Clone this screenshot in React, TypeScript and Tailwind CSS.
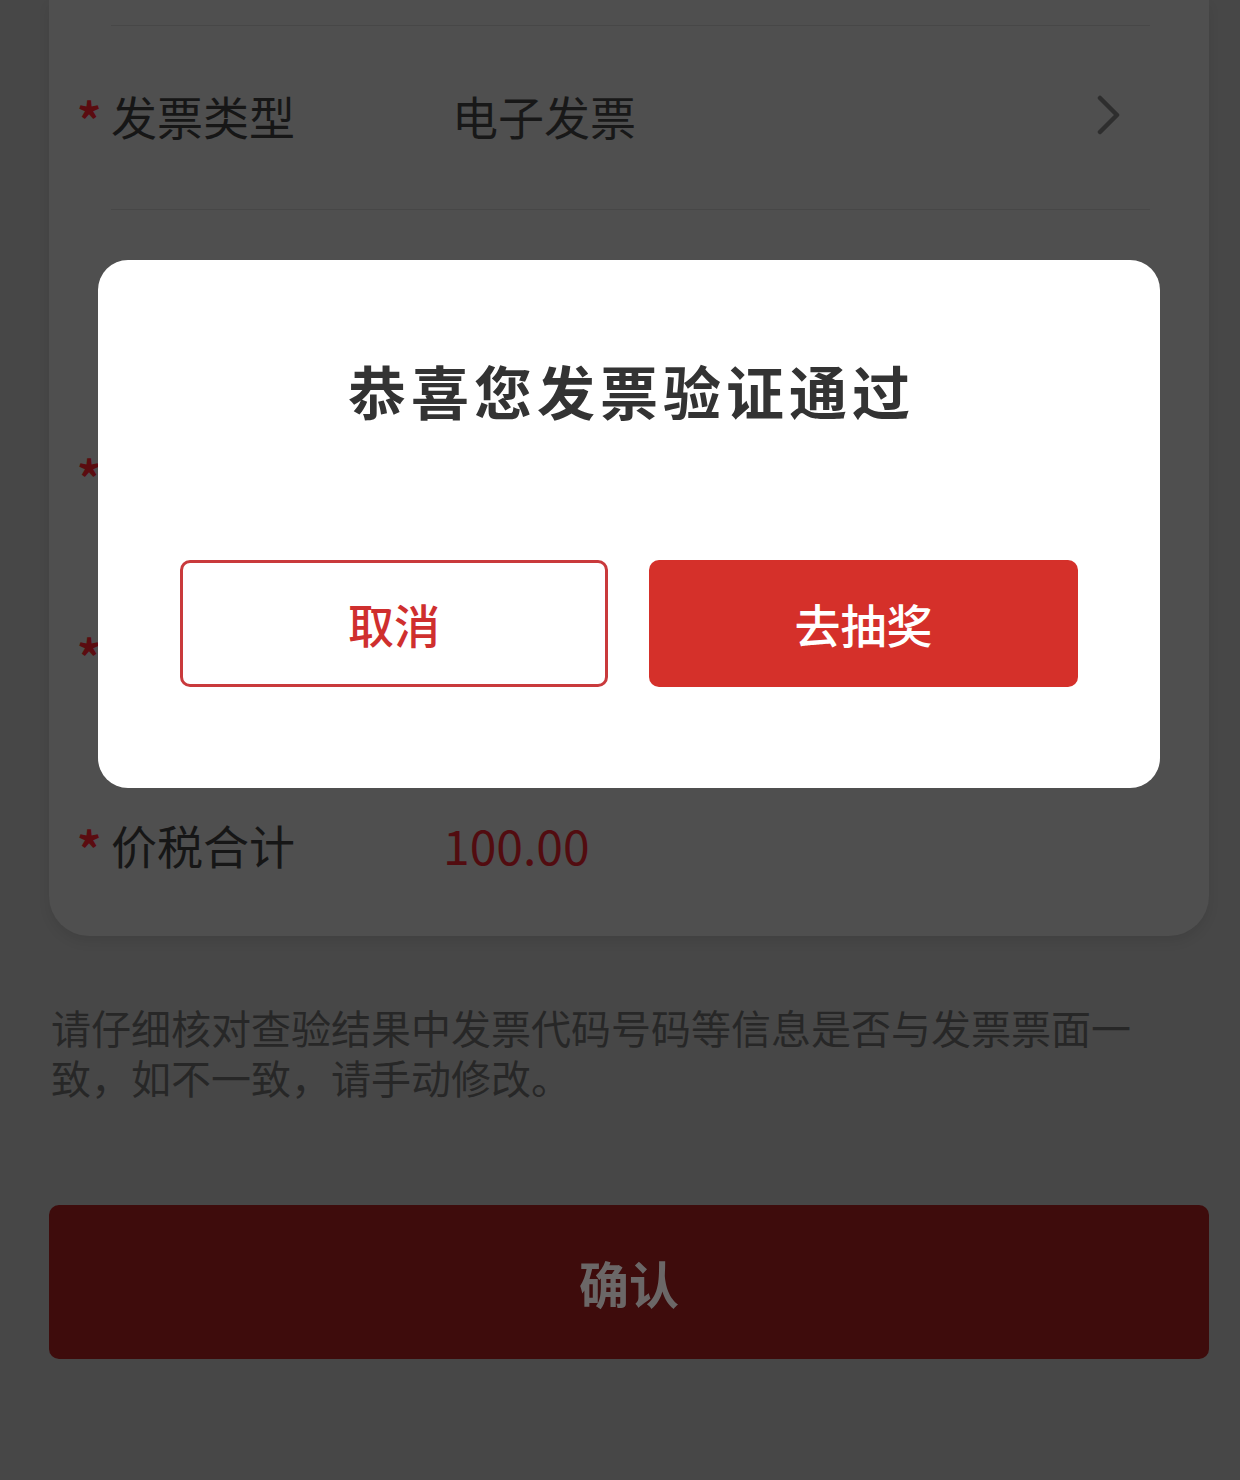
import React from 'react';

const font = { fontFamily: '"Noto Sans CJK SC", "Noto Sans", sans-serif' };

type Row = { label: string; value?: string; required?: boolean; arrow?: boolean; price?: boolean; h: string };

const rows: Row[] = [
  { label: '发票类型', value: '电子发票', required: true, arrow: true, h: 'h-[184px]' },
  { label: '校验码', value: '', h: 'h-[177px]' },
  { label: '发票代码', value: '', required: true, h: 'h-[179px]' },
  { label: '发票号码', value: '', required: true, h: 'h-[179px]' },
  { label: '价税合计', value: '100.00', required: true, price: true, h: 'h-[191px]' },
];

function Chevron() {
  return (
    <svg width="26" height="40" viewBox="0 0 26 40" fill="none">
      <path d="M4 3 L21 20 L4 37" stroke="#2e2e2e" strokeWidth="4.5" strokeLinecap="round" strokeLinejoin="round" />
    </svg>
  );
}

export default function App() {
  return (
    <div className="relative min-h-[1480px] w-[1240px] bg-[#474747] overflow-hidden" style={font}>
      {/* form card (dimmed by the dialog overlay) */}
      <div className="ml-[49px] w-[1160px] rounded-b-[40px] bg-[#4f4f4f] pt-[25px] shadow-[0_6px_12px_rgba(0,0,0,0.08)]">
        <div className="ml-[62px] mr-[59px] border-t border-[#474747]" />
        {rows.map((r, i) => (
          <div key={r.label} className={`${r.h} flex flex-col`}>
            <div className={`flex flex-1 items-center pl-[28px] pr-[87px] ${r.price ? 'pt-[6px]' : 'pb-[6px]'}`}>
              <span className="w-[34px] text-[48px] font-bold leading-none text-[#5b0c10] pt-[6px]">{r.required ? '*' : ''}</span>
              <span className="w-[341px] text-[46px] leading-none text-[#161616]">{r.label}</span>
              <span className={`flex-1 leading-none ${r.price ? 'text-[#520c10] text-[48px] -ml-[9px]' : 'text-[46px] text-[#181818]'}`}>
                {r.value}
              </span>
              {r.arrow && <Chevron />}
            </div>
            {i < rows.length - 1 && <div className="ml-[62px] mr-[59px] border-t border-[#474747]" />}
          </div>
        ))}
      </div>

      {/* note */}
      <p className="ml-[51px] mt-[66px] w-[1100px] text-[40px] leading-[50px] text-[#272727]">
        请仔细核对查验结果中发票代码号码等信息是否与发票票面一致，如不一致，请手动修改。
      </p>

      {/* submit */}
      <div className="ml-[49px] mt-[103px] flex h-[154px] w-[1160px] items-center justify-center rounded-[10px] bg-[#3e0c0c]">
        <span className="text-[50px] font-bold leading-none text-[#6b6767]">确认</span>
      </div>

      {/* dialog */}
      <div className="absolute left-[98px] top-[260px] w-[1062px] rounded-[30px] bg-white px-[82px] pt-[101px] pb-[101px]">
        <h2 className="pl-[5px] text-center text-[58px] font-bold leading-[58px] tracking-[5px] text-[#333333]">
          恭喜您发票验证通过
        </h2>
        <div className="mt-[141px] flex justify-between">
          <button className="flex h-[127px] w-[428px] items-center justify-center rounded-[10px] border-[3px] border-[#c93a3c] bg-white text-[46px] font-medium text-[#cf2f2e]">
            取消
          </button>
          <button className="flex h-[127px] w-[429px] items-center justify-center rounded-[10px] bg-[#d5302a] text-[46px] font-medium text-white">
            去抽奖
          </button>
        </div>
      </div>
    </div>
  );
}
